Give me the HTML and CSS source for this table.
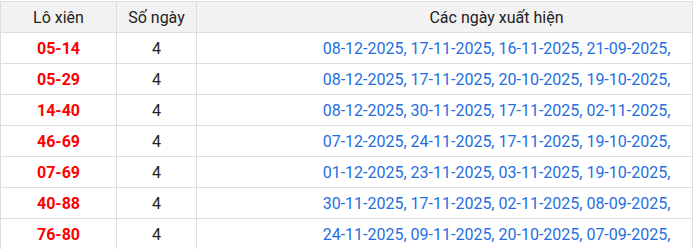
FILE: index.html
```html
<!DOCTYPE html>
<html lang="vi">
<head>
<meta charset="utf-8">
<link rel="stylesheet" href="styles.css">
</head>
<body>
<table class="lo-table">
  <thead>
    <tr>
      <th class="c-pair">Lô xiên</th>
      <th class="c-count">Số ngày</th>
      <th class="c-dates">Các ngày xuất hiện</th>
    </tr>
  </thead>
  <tbody>
    <tr><td class="c-pair pair">05-14</td><td class="c-count">4</td><td class="c-dates dates">08-12-2025, 17-11-2025, 16-11-2025, 21-09-2025,</td></tr>
    <tr><td class="c-pair pair">05-29</td><td class="c-count">4</td><td class="c-dates dates">08-12-2025, 17-11-2025, 20-10-2025, 19-10-2025,</td></tr>
    <tr><td class="c-pair pair">14-40</td><td class="c-count">4</td><td class="c-dates dates">08-12-2025, 30-11-2025, 17-11-2025, 02-11-2025,</td></tr>
    <tr><td class="c-pair pair">46-69</td><td class="c-count">4</td><td class="c-dates dates">07-12-2025, 24-11-2025, 17-11-2025, 19-10-2025,</td></tr>
    <tr><td class="c-pair pair">07-69</td><td class="c-count">4</td><td class="c-dates dates">01-12-2025, 23-11-2025, 03-11-2025, 19-10-2025,</td></tr>
    <tr><td class="c-pair pair">40-88</td><td class="c-count">4</td><td class="c-dates dates">30-11-2025, 17-11-2025, 02-11-2025, 08-09-2025,</td></tr>
    <tr><td class="c-pair pair">76-80</td><td class="c-count">4</td><td class="c-dates dates">24-11-2025, 09-11-2025, 20-10-2025, 07-09-2025,</td></tr>
  </tbody>
</table>
</body>
</html>
```
FILE: styles.css
```css
html, body {
  margin: 0;
  padding: 0;
  background: #fff;
}
body {
  padding-top: 1px;
  font-family: Roboto, "Liberation Sans", sans-serif;
  font-size: 16px;
  color: #222;
}
.lo-table {
  border-collapse: collapse;
  width: 693px;
  table-layout: fixed;
}
.lo-table th,
.lo-table td {
  border: 1px solid #dddddd;
  height: 30px;
  padding: 0;
  text-align: center;
  vertical-align: middle;
  white-space: nowrap;
  line-height: 19px;
  box-sizing: border-box;
}
.lo-table th {
  background: #f2f2f2;
  font-weight: normal;
  color: #222;
}
.lo-table tr {
  height: 31px;
}
.c-pair { width: 116px; }
.c-count { width: 80px; }
.lo-table .c-dates {
  padding-left: 104px;
}
.pair {
  color: #ff0000;
  font-weight: bold;
}
.dates {
  color: #1f6fe0;
}
```
